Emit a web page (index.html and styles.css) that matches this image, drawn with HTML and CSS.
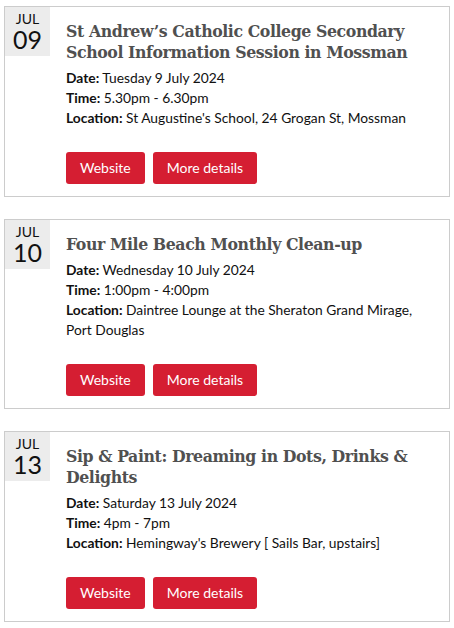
FILE: index.html
```html
<!DOCTYPE html>
<html>
<head>
<meta charset="utf-8">
<link rel="stylesheet" href="styles.css">
</head>
<body>
<div class="list">
  <div class="card">
    <div class="datebox"><span class="mon">JUL</span><span class="day">09</span></div>
    <div class="content">
      <h3 class="title">St Andrew’s Catholic College Secondary School Information Session in Mossman</h3>
      <p class="line"><b>Date:</b> Tuesday 9 July 2024</p>
      <p class="line"><b>Time:</b> 5.30pm - 6.30pm</p>
      <p class="line"><b>Location:</b> St Augustine's School, 24 Grogan St, Mossman</p>
      <div class="actions"><a class="btn">Website</a><a class="btn">More details</a></div>
    </div>
  </div>
  <div class="card">
    <div class="datebox"><span class="mon">JUL</span><span class="day">10</span></div>
    <div class="content">
      <h3 class="title">Four Mile Beach Monthly Clean-up</h3>
      <p class="line"><b>Date:</b> Wednesday 10 July 2024</p>
      <p class="line"><b>Time:</b> 1:00pm - 4:00pm</p>
      <p class="line"><b>Location:</b> Daintree Lounge at the Sheraton Grand Mirage, Port Douglas</p>
      <div class="actions"><a class="btn">Website</a><a class="btn">More details</a></div>
    </div>
  </div>
  <div class="card">
    <div class="datebox"><span class="mon">JUL</span><span class="day">13</span></div>
    <div class="content">
      <h3 class="title">Sip &amp; Paint: Dreaming in Dots, Drinks &amp; Delights</h3>
      <p class="line"><b>Date:</b> Saturday 13 July 2024</p>
      <p class="line"><b>Time:</b> 4pm - 7pm</p>
      <p class="line"><b>Location:</b> Hemingway's Brewery [ Sails Bar, upstairs]</p>
      <div class="actions"><a class="btn">Website</a><a class="btn">More details</a></div>
    </div>
  </div>
</div>
</body>
</html>
```

FILE: styles.css
```css
html, body {
  margin: 0;
  padding: 0;
  background: #fff;
}
body {
  padding: 6px 4px 0 4px;
  font-family: Lato, "Liberation Sans", sans-serif;
  color: #111;
}
.list {
  display: flex;
  flex-direction: column;
  gap: 22px;
}
.card {
  display: flex;
  align-items: flex-start;
  border: 1px solid #cccccc;
}
.datebox {
  width: 45px;
  height: 49px;
  flex: none;
  background: #ececec;
  display: flex;
  flex-direction: column;
  align-items: center;
}
.mon {
  font-size: 14px;
  line-height: 16px;
  margin-top: 4px;
  color: #111;
}
.day {
  font-size: 25px;
  line-height: 24px;
  color: #111;
}
.content {
  flex: 1;
  padding: 14px 16px 12px 16px;
}
.title {
  margin: 0 0 5px 0;
  font-family: "DejaVu Serif Condensed", "DejaVu Serif", serif;
  font-stretch: condensed;
  font-weight: bold;
  font-size: 17.5px;
  letter-spacing: -0.4px;
  line-height: 21px;
  color: #505050;
}
.line {
  margin: 0;
  font-size: 13.8px;
  line-height: 20px;
}
.line b {
  font-weight: bold;
}
.actions {
  display: flex;
  gap: 8px;
  margin-top: 24px;
}
.btn {
  display: block;
  background: #d51e32;
  color: #fff;
  font-size: 14px;
  line-height: 32px;
  height: 32px;
  padding: 0 14px;
  border-radius: 3px;
}
```
